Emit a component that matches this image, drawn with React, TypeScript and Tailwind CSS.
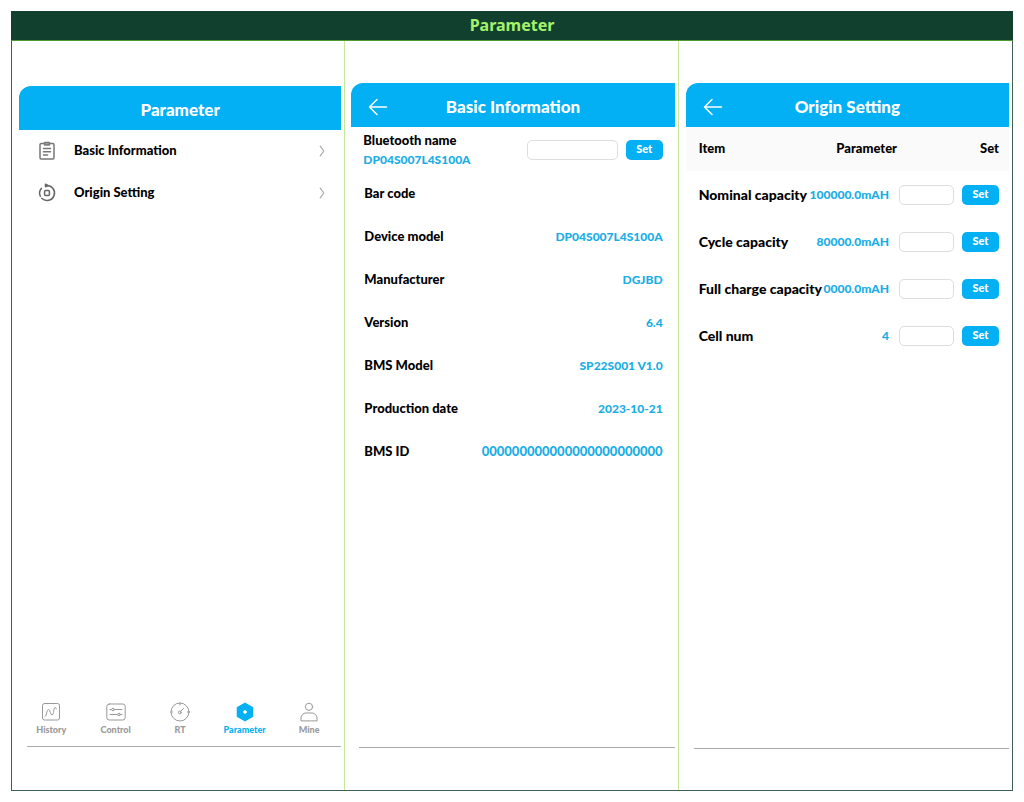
import { useState, type ReactNode } from 'react';

const info = [
  { label: 'Bar code', value: '' },
  { label: 'Device model', value: 'DP04S007L4S100A' },
  { label: 'Manufacturer', value: 'DGJBD' },
  { label: 'Version', value: '6.4' },
  { label: 'BMS Model', value: 'SP22S001 V1.0' },
  { label: 'Production date', value: '2023-10-21' },
  { label: 'BMS ID', value: '000000000000000000000000', wide: true },
];

const settings = [
  { label: 'Nominal capacity', value: '100000.0mAH' },
  { label: 'Cycle capacity', value: '80000.0mAH' },
  { label: 'Full charge capacity', value: '0000.0mAH' },
  { label: 'Cell num', value: '4' },
];

function Icon({ children, className }: { children: ReactNode; className: string }) {
  return (
    <svg
      viewBox="0 0 20 20"
      fill="none"
      stroke="currentColor"
      strokeLinecap="round"
      strokeLinejoin="round"
      className={className}
      aria-hidden="true"
    >
      {children}
    </svg>
  );
}

const menu = [
  {
    label: 'Basic Information',
    icon: (
      <Icon className="size-5 text-[#777] stroke-[1.5]">
        <rect x="3" y="2.5" width="14" height="15.5" rx="1.2" />
        <rect x="7.5" y="1.5" width="5" height="2.600" rx="0.600" fill="#aaa" />
        <path d="M6.5 7.500h7M6.5 10.700h7M6.5 13.900h4" />
      </Icon>
    ),
  },
  {
    label: 'Origin Setting',
    icon: (
      <Icon className="size-5 text-[#666] stroke-[1.5]">
        <path d="M9.500 2.500a7.500 7.500 0 1 1-4.800 12.800M3.300 13.200a7.500 7.500 0 0 1 1.200-8" />
        <path d="M8.500 1.200v2.600l2.600-1.200z" fill="currentColor" />
        <rect x="7.600" y="7.600" width="4.800" height="4.800" rx="1" />
      </Icon>
    ),
  },
];

const tabs = [
  {
    label: 'History',
    icon: (
      <>
        <rect x="1.5" y="1.5" width="17" height="16.5" rx="2" />
        <path d="M4 14.5c2-.5 1.500-7 3.500-7s1.500 5.500 3.500 5.500 1.500-7.500 3-7.500c.8 0 1 .8 1.500 1.500" />
      </>
    ),
  },
  {
    label: 'Control',
    icon: (
      <>
        <rect x="0.8" y="2" width="18.4" height="16" rx="2.5" />
        <path d="M4 7.5h12M4 12.5h12" />
        <circle cx="7" cy="7.5" r="1.3" fill="white" />
        <circle cx="13" cy="12.5" r="1.3" fill="white" />
      </>
    ),
  },
  {
    label: 'RT',
    icon: (
      <>
        <circle cx="10" cy="10" r="9" />
        <path d="M10 1v2M1 10h1.5M17.5 10H19M10.8 9.2 13.500 6.500" />
        <circle cx="9.8" cy="10.4" r="1.4" />
      </>
    ),
  },
  {
    label: 'Parameter',
    icon: (
      <>
        <path d="M10 1.5 17.5 5.600v8.800L10 18.5l-7.500-4.100V5.600z" fill="currentColor" stroke="currentColor" strokeWidth="1.5" />
        <circle cx="10" cy="10" r="1.3" fill="white" stroke="white" />
      </>
    ),
  },
  {
    label: 'Mine',
    icon: (
      <>
        <circle cx="10" cy="4.8" r="3.6" />
        <path d="M2 18.5v-2.5a5 5 0 0 1 5-5h6a5 5 0 0 1 5 5v2.500z" />
      </>
    ),
  },
];

function Header({ title, back }: { title: string; back?: boolean }) {
  return (
    <header className="grid h-11 grid-cols-[54px_1fr_54px] items-center rounded-tl-xl bg-[#02b0f3] pt-1 text-white">
      {back ? (
        <button type="button" aria-label="Back" className="flex justify-center">
          <Icon className="size-5 stroke-[1.5]">
            <path d="M18.500 10H1.500M9 2.500 1.500 10 9 17.500" />
          </Icon>
        </button>
      ) : (
        <span />
      )}
      <h2 className="text-center text-[17px] leading-6 font-black">{title}</h2>
    </header>
  );
}

function SetButton({ label }: { label: string }) {
  return (
    <button
      type="button"
      aria-label={`Set ${label}`}
      className="h-5 w-[37px] shrink-0 rounded-[5px] bg-[#02b0f3] text-[11px] font-black text-white"
    >
      Set
    </button>
  );
}

function ParameterPanel() {
  const [active, setActive] = useState('Parameter');

  return (
    <section className="flex flex-col border-r border-[#c9e79a] pt-[45px] pr-[3px] pb-[43px] pl-[7px]">
      <Header title="Parameter" />
      <ul>
        {menu.map((item) => (
          <li key={item.label}>
            <button type="button" className="flex h-[42px] w-full items-center pr-[13px] pl-[18px] text-left">
              {item.icon}
              <span className="ml-[17px] flex-1 text-[13px] font-black">{item.label}</span>
              <Icon className="size-3 text-[#aaa] stroke-2">
                <path d="M7 2l6 8-6 8" />
              </Icon>
            </button>
          </li>
        ))}
      </ul>
      <nav className="mt-auto grid grid-cols-5 pb-2">
        {tabs.map((tab) => (
          <button
            key={tab.label}
            type="button"
            onClick={() => setActive(tab.label)}
            className={`flex flex-col items-center text-[9px] leading-4 font-black ${
              tab.label === active ? 'text-[#02b0f3]' : 'text-[#999]'
            }`}
          >
            <Icon className="size-5 stroke-1">{tab.icon}</Icon>
            {tab.label}
          </button>
        ))}
      </nav>
      <hr className="ml-2 border-[#aaa]" />
    </section>
  );
}

function InfoPanel() {
  return (
    <section className="flex flex-col border-r border-[#c9e79a] pt-[42px] pr-[3px] pb-[42px] pl-[6px]">
      <Header title="Basic Information" back />
      <div className="flex h-[45px] items-center px-3">
        <div className="flex-1 text-[13px] leading-[19px] font-black">
          <label htmlFor="bluetooth">Bluetooth name</label>
          <p className="text-xs leading-[19px] text-[#1aaee5]">DP04S007L4S100A</p>
        </div>
        <input id="bluetooth" className="mr-2 h-5 w-[91px] rounded-[5px] border border-[#ddd] px-1 text-xs" />
        <SetButton label="Bluetooth name" />
      </div>
      <dl className="font-black">
        {info.map((row) => (
          <div key={row.label} className="flex h-[43px] items-center justify-between pr-3 pl-[13px]">
            <dt className="text-[13px]">{row.label}</dt>
            <dd className={`text-[#1aaee5] ${row.wide ? 'text-[13px]' : 'text-xs'}`}>{row.value}</dd>
          </div>
        ))}
      </dl>
      <hr className="mt-auto ml-2 border-[#aaa]" />
    </section>
  );
}

function OriginPanel() {
  return (
    <section className="flex flex-col pt-[42px] pr-[3px] pb-[41px] pl-[7px]">
      <Header title="Origin Setting" back />
      <table className="w-full table-fixed font-black whitespace-nowrap">
        <thead className="bg-[#fafafa] text-[13px]">
          <tr className="h-11">
            <th className="pl-[13px] text-left font-black">Item</th>
            <th className="w-[90px] pr-0.5 text-right font-black">Parameter</th>
            <th className="w-[110px] pr-[10px] text-right font-black">Set</th>
          </tr>
        </thead>
        <tbody>
          {settings.map((row) => (
            <tr key={row.label} className="h-[47px]">
              <td className="pl-[13px] text-sm">{row.label}</td>
              <td className="pr-[10px] text-right text-xs text-[#1aaee5]">{row.value}</td>
              <td className="pr-[10px]">
                <div className="flex justify-end gap-2">
                  <input
                    aria-label={row.label}
                    className="h-5 w-[55px] rounded-[5px] border border-[#ddd] px-1 text-xs"
                  />
                  <SetButton label={row.label} />
                </div>
              </td>
            </tr>
          ))}
        </tbody>
      </table>
      <hr className="mt-auto ml-2 border-[#aaa]" />
    </section>
  );
}

export default function App() {
  return (
    <div className="flex min-h-screen flex-col bg-white p-[11px] font-['Lato','Open_Sans',sans-serif] text-black">
      <h1 className="h-[30px] border-b border-[#4f9a35] bg-[#12402f] text-center font-['Noto_Sans',sans-serif] text-base leading-[29px] font-bold text-[#a4f36c]">
        Parameter
      </h1>
      <main className="grid flex-1 grid-cols-3 border border-t-0 border-[#3f5f55]">
        <ParameterPanel />
        <InfoPanel />
        <OriginPanel />
      </main>
    </div>
  );
}
